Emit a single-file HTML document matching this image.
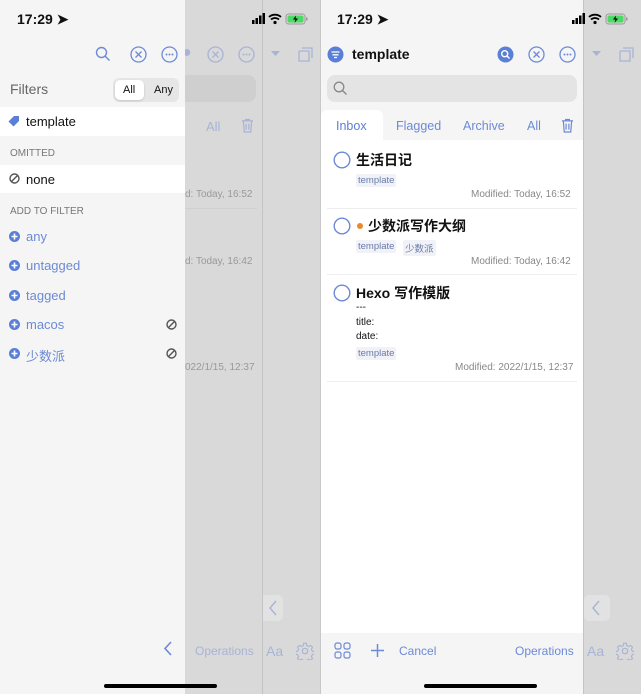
<!DOCTYPE html>
<html><head><meta charset="utf-8"><style>
*{margin:0;padding:0;box-sizing:border-box}
body{width:641px;height:694px;position:relative;overflow:hidden;background:#f5f5f5;font-family:"Liberation Sans","Noto Sans CJK SC",sans-serif;color:#111}
.a{position:absolute}
.t{position:absolute;white-space:nowrap}
.blue{color:#6c8ad6}
.g{color:#888}
svg{position:absolute}
.tag{position:absolute;white-space:nowrap;font-size:9.5px;color:#6a7ba8;background:#f0f2f7;padding:1px 2px;border-radius:2px}
</style></head><body>
<svg width="0" height="0"><defs>
<symbol id="p" viewBox="0 0 11 11"><circle cx="5.5" cy="5.5" r="5.5" fill="#5b7fd6"/><path d="M5.5 2.5v6M2.5 5.5h6" stroke="#fff" stroke-width="1.6"/></symbol>
<symbol id="o" viewBox="0 0 11 11"><circle cx="5.5" cy="5.5" r="4.5" fill="none" stroke="#555" stroke-width="1.4"/><path d="M2.5 8.5l6-6" stroke="#555" stroke-width="1.4"/></symbol>
<symbol id="c" viewBox="0 0 18 18"><circle cx="9" cy="9" r="7.8" fill="none" stroke="#6c8ad6" stroke-width="1.4"/></symbol>
<symbol id="st" viewBox="0 0 56 14"><rect x="0" y="8" width="2.5" height="4" fill="#000"/><rect x="3.5" y="6" width="2.5" height="6" fill="#000"/><rect x="7" y="3.5" width="2.5" height="8.5" fill="#000"/><rect x="10.5" y="1" width="2.5" height="11" fill="#000"/><path d="M17 5a9 9 0 0 1 12 0M19 7.5a6 6 0 0 1 8 0" fill="none" stroke="#000" stroke-width="1.8"/><circle cx="23" cy="10.5" r="1.6" fill="#000"/><rect x="34" y="2" width="19" height="10" rx="2.5" fill="none" stroke="#999" stroke-width="1"/><rect x="35.5" y="3.5" width="16" height="7" rx="1.5" fill="#4cd964"/><path d="M44 3.5l-3 4h2.5l-1 3.5 3.5-4.5h-2.5z" fill="#000"/><rect x="54" y="5.5" width="1.5" height="3" fill="#999"/></symbol>
<symbol id="tr" viewBox="0 0 14 16"><path d="M1 3h12M5 3V1.5h4V3M2.5 3l1 12h7l1-12M5.5 6v6.5M8.5 6v6.5" fill="none" stroke="currentColor" stroke-width="1.3"/></symbol>
<symbol id="gear" viewBox="0 0 20 20"><circle cx="10" cy="10" r="3" fill="none" stroke="currentColor" stroke-width="1.3"/><path d="M8.5 1.5h3l.5 2.5 2 1 2.3-1.2 2 2-1.2 2.3 1 2 2.4.5v3l-2.4.5-1 2 1.2 2.3-2 2-2.3-1.2-2 1-.5 2.4h-3l-.5-2.4-2-1-2.3 1.2-2-2 1.2-2.3-1-2-2.4-.5v-3l2.4-.5 1-2-1.2-2.3 2-2 2.3 1.2 2-1z" fill="none" stroke="currentColor" stroke-width="1.2"/></symbol>
</defs></svg>
<!-- dimmed backgrounds -->
<div class="a" style="left:185px;top:0;width:136px;height:694px;background:#d9d9d9"></div>
<div class="a" style="left:262px;top:0;width:1px;height:694px;background:#c4c4c4"></div>
<div class="a" style="left:320px;top:0;width:1px;height:694px;background:#c8c8c8"></div>
<div class="a" style="left:583px;top:0;width:58px;height:694px;background:#d9d9d9;border-left:1px solid #c4c4c4"></div>

<svg style="left:252px;top:12px" width="56" height="14"><use href="#st"/></svg>
<svg style="left:572px;top:12px" width="56" height="14"><use href="#st"/></svg>
<div class="t" style="left:337px;top:11px;font-size:14px;font-weight:bold">17:29 ➤</div>

<!-- dimmed app left -->
<div class="t" style="left:182px;top:44px;font-size:16px;color:#a8b4d6">●</div>
<svg style="left:207px;top:46px" width="17" height="17"><circle cx="8.5" cy="8.5" r="7.5" fill="none" stroke="#a8b4d6" stroke-width="1.3"/><path d="M5.5 5.5l6 6M11.5 5.5l-6 6" stroke="#a8b4d6" stroke-width="1.3"/></svg>
<svg style="left:238px;top:46px" width="17" height="17"><circle cx="8.5" cy="8.5" r="7.5" fill="none" stroke="#a8b4d6" stroke-width="1.3"/><circle cx="5.5" cy="8.5" r="1" fill="#a8b4d6"/><circle cx="8.5" cy="8.5" r="1" fill="#a8b4d6"/><circle cx="11.5" cy="8.5" r="1" fill="#a8b4d6"/></svg>
<svg style="left:271px;top:51px" width="9" height="6"><path d="M0 0h9L4.5 5z" fill="#a8b4d6"/></svg>
<svg style="left:298px;top:47px" width="15" height="15"><path d="M4 1h10v10M1 4v10h10V4H1" fill="none" stroke="#a8b4d6" stroke-width="1.3"/></svg>
<div class="a" style="left:185px;top:75px;width:71px;height:27px;background:#cfcfcf;border-radius:0 8px 8px 0"></div>
<div class="t" style="left:206px;top:119px;font-size:13px;color:#a8b4d6">All</div>
<svg style="left:241px;top:118px;color:#a8b4d6" width="13" height="15"><use href="#tr"/></svg>
<div class="t" style="left:185px;top:189px;font-size:10px;color:#999">d: Today, 16:52</div>
<div class="a" style="left:185px;top:208px;width:72px;height:1px;background:#d0d0d0"></div>
<div class="t" style="left:185px;top:256px;font-size:10px;color:#999">d: Today, 16:42</div>
<div class="t" style="left:185px;top:362px;font-size:10px;color:#999">022/1/15, 12:37</div>
<div class="a" style="left:263px;top:595px;width:20px;height:26px;background:#e2e2e2;border-radius:0 5px 5px 0"></div>
<svg style="left:268px;top:600px" width="10" height="16"><path d="M8 1L2 8l6 7" fill="none" stroke="#a8b4d6" stroke-width="1.4"/></svg>
<div class="t" style="left:195px;top:644px;font-size:12px;color:#a8b4d6">Operations</div>
<div class="t" style="left:266px;top:643px;font-size:14px;color:#a8b4d6">Aa</div>
<svg style="left:296px;top:642px;color:#a8b4d6" width="18" height="18"><use href="#gear"/></svg>

<!-- left filter panel -->
<div class="a" style="left:0;top:0;width:185px;height:694px;background:#f5f5f5"></div>
<div class="t" style="left:17px;top:11px;font-size:14px;font-weight:bold">17:29 ➤</div>
<svg style="left:95px;top:46px" width="16" height="16"><circle cx="6.5" cy="6.5" r="5" fill="none" stroke="#6c8ad6" stroke-width="1.4"/><path d="M10 10l4.5 4.5" stroke="#6c8ad6" stroke-width="1.4"/></svg>
<svg style="left:130px;top:46px" width="17" height="17"><circle cx="8.5" cy="8.5" r="7.5" fill="none" stroke="#6c8ad6" stroke-width="1.3"/><path d="M5.5 5.5l6 6M11.5 5.5l-6 6" stroke="#6c8ad6" stroke-width="1.3"/></svg>
<svg style="left:161px;top:46px" width="17" height="17"><circle cx="8.5" cy="8.5" r="7.5" fill="none" stroke="#6c8ad6" stroke-width="1.3"/><circle cx="5.5" cy="8.5" r="1" fill="#6c8ad6"/><circle cx="8.5" cy="8.5" r="1" fill="#6c8ad6"/><circle cx="11.5" cy="8.5" r="1" fill="#6c8ad6"/></svg>
<div class="t" style="left:10px;top:81px;font-size:14px;color:#666">Filters</div>
<div class="a" style="left:113px;top:78px;width:66px;height:24px;background:#e6e6e6;border-radius:6px"></div>
<div class="a" style="left:115px;top:80px;width:29px;height:20px;background:#fff;border-radius:5px;box-shadow:0 1px 2px rgba(0,0,0,.15)"></div>
<div class="t" style="left:123px;top:84px;font-size:11px">All</div>
<div class="t" style="left:154px;top:84px;font-size:11px">Any</div>
<div class="a" style="left:0;top:107px;width:185px;height:29px;background:#fff"></div>
<svg style="left:8px;top:115px" width="12" height="12"><path d="M6 1h5v5L5.5 11.5 0.5 6.5z" fill="#5b7fd6"/></svg>
<div class="t" style="left:26px;top:114px;font-size:13px">template</div>
<div class="t" style="left:10px;top:148px;font-size:10px;color:#777">OMITTED</div>
<div class="a" style="left:0;top:165px;width:185px;height:28px;background:#fff"></div>
<svg style="left:9px;top:173px" width="11" height="11"><use href="#o"/></svg>
<div class="t" style="left:26px;top:172px;font-size:13px">none</div>
<div class="t" style="left:10px;top:206px;font-size:10px;color:#777">ADD TO FILTER</div>
<svg style="left:9px;top:231px" width="11" height="11"><use href="#p"/></svg>
<div class="t blue" style="left:26px;top:229px;font-size:13px">any</div>
<svg style="left:9px;top:260px" width="11" height="11"><use href="#p"/></svg>
<div class="t blue" style="left:26px;top:258px;font-size:13px">untagged</div>
<svg style="left:9px;top:290px" width="11" height="11"><use href="#p"/></svg>
<div class="t blue" style="left:26px;top:288px;font-size:13px">tagged</div>
<svg style="left:9px;top:319px" width="11" height="11"><use href="#p"/></svg>
<div class="t blue" style="left:26px;top:317px;font-size:13px">macos</div>
<svg style="left:166px;top:319px" width="11" height="11"><use href="#o"/></svg>
<svg style="left:9px;top:348px" width="11" height="11"><use href="#p"/></svg>
<div class="t blue" style="left:26px;top:346px;font-size:13px">少数派</div>
<svg style="left:166px;top:348px" width="11" height="11"><use href="#o"/></svg>
<svg style="left:163px;top:641px" width="10" height="15"><path d="M8 1L2 7.5 8 14" fill="none" stroke="#6c8ad6" stroke-width="1.6"/></svg>
<div class="a" style="left:104px;top:684px;width:113px;height:4px;background:#000;border-radius:2px"></div>

<!-- right app -->
<div class="a" style="left:321px;top:140px;width:262px;height:493px;background:#fff"></div>
<div class="a" style="left:321px;top:110px;width:62px;height:32px;background:#fff;border-radius:6px 6px 0 0"></div>
<svg style="left:327px;top:46px" width="17" height="17"><circle cx="8.5" cy="8.5" r="8" fill="#5b7fd6"/><path d="M4.5 6h8M5.5 8.8h6M7 11.5h3" stroke="#fff" stroke-width="1.3"/></svg>
<div class="t" style="left:352px;top:46px;font-size:14px;font-weight:bold">template</div>
<svg style="left:497px;top:46px" width="17" height="17"><circle cx="8.5" cy="8.5" r="8" fill="#5b7fd6"/><circle cx="7.7" cy="7.7" r="3" fill="none" stroke="#fff" stroke-width="1.4"/><path d="M10 10l2.5 2.5" stroke="#fff" stroke-width="1.5"/></svg>
<svg style="left:528px;top:46px" width="17" height="17"><circle cx="8.5" cy="8.5" r="7.5" fill="none" stroke="#6c8ad6" stroke-width="1.3"/><path d="M5.5 5.5l6 6M11.5 5.5l-6 6" stroke="#6c8ad6" stroke-width="1.3"/></svg>
<svg style="left:559px;top:46px" width="17" height="17"><circle cx="8.5" cy="8.5" r="7.5" fill="none" stroke="#6c8ad6" stroke-width="1.3"/><circle cx="5.5" cy="8.5" r="1" fill="#6c8ad6"/><circle cx="8.5" cy="8.5" r="1" fill="#6c8ad6"/><circle cx="11.5" cy="8.5" r="1" fill="#6c8ad6"/></svg>
<svg style="left:592px;top:51px" width="9" height="6"><path d="M0 0h9L4.5 5z" fill="#a8b4d6"/></svg>
<svg style="left:619px;top:47px" width="15" height="15"><path d="M4 1h10v10M1 4v10h10V4H1" fill="none" stroke="#a8b4d6" stroke-width="1.3"/></svg>
<div class="a" style="left:327px;top:75px;width:250px;height:27px;background:#e4e4e4;border-radius:8px"></div>
<svg style="left:333px;top:81px" width="15" height="15"><circle cx="6" cy="6" r="4.8" fill="none" stroke="#888" stroke-width="1.3"/><path d="M9.5 9.5l4 4" stroke="#888" stroke-width="1.3"/></svg>
<div class="t" style="left:336px;top:119px;font-size:12.5px;color:#5b7fd6">Inbox</div>
<div class="t blue" style="left:396px;top:119px;font-size:12.5px">Flagged</div>
<div class="t blue" style="left:463px;top:119px;font-size:12.5px">Archive</div>
<div class="t blue" style="left:527px;top:119px;font-size:12.5px">All</div>
<svg style="left:561px;top:118px;color:#6c8ad6" width="13" height="15"><use href="#tr"/></svg>

<svg style="left:333px;top:151px" width="18" height="18"><use href="#c"/></svg>
<div class="t" style="left:356px;top:150px;font-size:14px;font-weight:bold">生活日记</div>
<div class="tag" style="left:356px;top:174px">template</div>
<div class="t g" style="left:471px;top:189px;font-size:10px">Modified: Today, 16:52</div>
<div class="a" style="left:327px;top:208px;width:250px;height:1px;background:#eee"></div>
<svg style="left:333px;top:217px" width="18" height="18"><use href="#c"/></svg>
<div class="a" style="left:357px;top:223px;width:6px;height:6px;border-radius:3px;background:#e8892f"></div>
<div class="t" style="left:368px;top:216px;font-size:14px;font-weight:bold">少数派写作大纲</div>
<div class="tag" style="left:356px;top:240px">template</div>
<div class="tag" style="left:403px;top:240px">少数派</div>
<div class="t g" style="left:471px;top:256px;font-size:10px">Modified: Today, 16:42</div>
<div class="a" style="left:327px;top:274px;width:250px;height:1px;background:#eee"></div>
<svg style="left:333px;top:284px" width="18" height="18"><use href="#c"/></svg>
<div class="t" style="left:356px;top:283px;font-size:14px;font-weight:bold">Hexo 写作模版</div>
<div class="t" style="left:356px;top:302px;font-size:10px">---</div>
<div class="t" style="left:356px;top:317px;font-size:10px">title:</div>
<div class="t" style="left:356px;top:331px;font-size:10px">date:</div>
<div class="tag" style="left:356px;top:347px">template</div>
<div class="t g" style="left:455px;top:362px;font-size:10px">Modified: 2022/1/15, 12:37</div>
<div class="a" style="left:327px;top:381px;width:250px;height:1px;background:#eee"></div>

<div class="a" style="left:584px;top:595px;width:26px;height:26px;background:#e2e2e2;border-radius:5px"></div>
<svg style="left:591px;top:600px" width="10" height="16"><path d="M8 1L2 8l6 7" fill="none" stroke="#a8b4d6" stroke-width="1.4"/></svg>
<svg style="left:334px;top:642px" width="17" height="17"><rect x="1" y="1" width="6" height="6" rx="2" fill="none" stroke="#6c8ad6" stroke-width="1.2"/><rect x="10" y="1" width="6" height="6" rx="2" fill="none" stroke="#6c8ad6" stroke-width="1.2"/><rect x="1" y="10" width="6" height="6" rx="2" fill="none" stroke="#6c8ad6" stroke-width="1.2"/><rect x="10" y="10" width="6" height="6" rx="2" fill="none" stroke="#6c8ad6" stroke-width="1.2"/></svg>
<svg style="left:370px;top:643px" width="15" height="15"><path d="M7.5 1v13M1 7.5h13" stroke="#6c8ad6" stroke-width="1.5"/></svg>
<div class="t blue" style="left:399px;top:644px;font-size:12px">Cancel</div>
<div class="t blue" style="left:515px;top:644px;font-size:12px">Operations</div>
<div class="t" style="left:587px;top:643px;font-size:14px;color:#a8b4d6">Aa</div>
<svg style="left:616px;top:642px;color:#a8b4d6" width="18" height="18"><use href="#gear"/></svg>
<div class="a" style="left:424px;top:684px;width:113px;height:4px;background:#000;border-radius:2px"></div>
</body></html>
